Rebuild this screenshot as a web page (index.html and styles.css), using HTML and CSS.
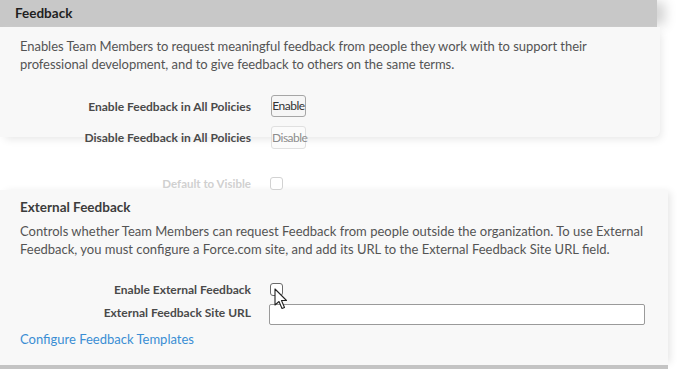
FILE: index.html
```html
<!DOCTYPE html>
<html>
<head>
<meta charset="utf-8">
<link rel="stylesheet" href="styles.css">
</head>
<body>
<div class="page">
  <div class="hdr">Feedback</div>
  <div class="panel p1">
    <p class="desc">Enables Team Members to request meaningful feedback from people they work with to support their professional development, and to give feedback to others on the same terms.</p>
    <div class="form f1">
      <div class="row">
        <span class="lbl">Enable Feedback in All Policies</span>
        <button class="btn">Enable</button>
      </div>
      <div class="row">
        <span class="lbl">Disable Feedback in All Policies</span>
        <button class="btn dim">Disable</button>
      </div>
    </div>
  </div>
  <div class="gap">
    <div class="row faded">
      <span class="lbl">Default to Visible</span>
      <span class="cb"></span>
    </div>
  </div>
  <div class="panel p2">
    <h2 class="title">External Feedback</h2>
    <p class="desc wide">Controls whether Team Members can request Feedback from people outside the organization. To use External Feedback, you must configure a Force.com site, and add its URL to the External Feedback Site URL field.</p>
    <div class="form f2">
      <div class="row r1">
        <span class="lbl">Enable External Feedback</span>
        <span class="cb dark">
          <svg class="cursor" width="14" height="22" viewBox="0 0 14 22"><path d="M1 1 L1 17 L5 13.5 L8 20.5 L10.5 19.5 L7.5 12.5 L12.5 12.5 Z" fill="#fff" stroke="#222" stroke-width="1.1" stroke-linejoin="round"/></svg>
        </span>
      </div>
      <div class="row r2">
        <span class="lbl">External Feedback Site URL</span>
        <span class="input"></span>
      </div>
    </div>
    <a class="link" href="#">Configure Feedback Templates</a>
  </div>
  <div class="bottombar"></div>
</div>
</body>
</html>
```
FILE: styles.css
```css
html, body {
  margin: 0;
  padding: 0;
  background: #ffffff;
}
body {
  font-family: Lato, "Open Sans", "Liberation Sans", sans-serif;
  color: #4a4a4a;
  width: 685px;
  height: 369px;
  overflow: hidden;
}
.page {
  display: flex;
  flex-direction: column;
}
.hdr {
  width: 657px;
  height: 27px;
  box-sizing: border-box;
  padding-left: 15px;
  background: #c8c8c8;
  font-size: 13.5px;
  font-weight: 700;
  line-height: 27px;
  color: #1f1f1f;
  box-shadow: 10px 0 12px -2px #d4d4d4;
}
.panel {
  background: #f8f8f8;
  box-sizing: border-box;
}
.p1 {
  width: 660px;
  height: 110px;
  padding: 10px 0 0 20px;
  border-bottom-right-radius: 6px;
  box-shadow: 3px 4px 8px -2px #e6e6e6;
  position: relative;
  z-index: 1;
}
.desc {
  margin: 0;
  font-size: 13px;
  line-height: 18px;
  color: #545454;
  width: 600px;
  letter-spacing: -0.05px;
}
.desc.wide {
  width: 640px;
  letter-spacing: 0;
}
.form {
  display: flex;
  flex-direction: column;
}
.f1 {
  margin-top: 22px;
  margin-left: -20px;
  gap: 9px;
}
.row {
  display: flex;
  align-items: center;
  gap: 19px;
}
.lbl {
  width: 251px;
  text-align: right;
  font-size: 12px;
  font-weight: 700;
  color: #4a4a4a;
  flex-shrink: 0;
}
.btn {
  font-family: Lato, "Open Sans", "Liberation Sans", sans-serif;
  font-size: 12px;
  letter-spacing: -0.5px;
  height: 22px;
  width: 35px;
  padding: 0;
  margin-left: 1px;
  background: #f6f6f6;
  border: 1px solid #a6a6a6;
  border-radius: 3px;
  color: #333;
  line-height: 20px;
  text-align: center;
}
.btn.dim {
  color: #8c8c8c;
  border-color: #e0e0e0;
  background: #fbfbfb;
  height: 23px;
}
.gap {
  height: 53px;
  box-sizing: border-box;
  padding-top: 40px;
}
.faded .lbl {
  color: #cfcfcf;
  font-weight: 700;
  font-size: 11.5px;
}
.cb {
  width: 11px;
  height: 11px;
  border: 1px solid #d2d2d2;
  border-radius: 3px;
  background: #fff;
  position: relative;
}
.cb.dark {
  border-color: #6a6a6a;
}
.cursor {
  position: absolute;
  left: 3px;
  top: 4px;
}
.p2 {
  width: 668px;
  height: 175px;
  padding: 8px 0 0 20px;
  box-shadow: 4px 0 8px -2px #e4e4e4;
}
.title {
  margin: 0;
  font-size: 13.5px;
  font-weight: 700;
  line-height: 18px;
  color: #3c3c3c;
}
.desc.wide {
  margin-top: 6px;
}
.f2 {
  margin-left: -20px;
  margin-top: 21px;
  gap: 4px;
}
.r1 {
  height: 21px;
}
.r2 .lbl {
  position: relative;
  top: -2px;
}
.input {
  width: 374px;
  height: 19px;
  margin-left: -1px;
  border: 1px solid #9a9a9a;
  border-radius: 2px;
  background: #fff;
}
.link {
  display: block;
  margin-top: 5px;
  font-size: 13px;
  line-height: 18px;
  color: #3a8ed4;
  text-decoration: none;
}
.bottombar {
  width: 668px;
  height: 4px;
  background: #c4c4c4;
  box-shadow: 6px 0 8px -2px #d8d8d8;
}
```
